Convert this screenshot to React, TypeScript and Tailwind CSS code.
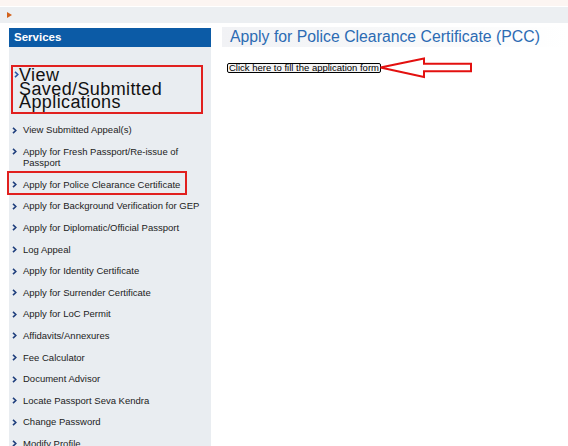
import React from "react";

const Chevron = ({ color = "#1f3f7d" }: { color?: string }) => (
  <svg width="5" height="7" viewBox="0 0 5 7" className="shrink-0">
    <polyline points="1,0.8 3.8,3.5 1,6.2" fill="none" stroke={color} strokeWidth="1.6" />
  </svg>
);

type Item = { label: React.ReactNode; highlight?: boolean };

const items: Item[] = [
  { label: "View Submitted Appeal(s)" },
  { label: <>Apply for Fresh Passport/Re-issue of<br />Passport</> },
  { label: "Apply for Police Clearance Certificate", highlight: true },
  { label: "Apply for Background Verification for GEP" },
  { label: "Apply for Diplomatic/Official Passport" },
  { label: "Log Appeal" },
  { label: "Apply for Identity Certificate" },
  { label: "Apply for Surrender Certificate" },
  { label: "Apply for LoC Permit" },
  { label: "Affidavits/Annexures" },
  { label: "Fee Calculator" },
  { label: "Document Advisor" },
  { label: "Locate Passport Seva Kendra" },
  { label: "Change Password" },
  { label: "Modify Profile" },
];

export default function App() {
  return (
    <div
      className="w-[568px] h-[446px] overflow-hidden bg-white"
      style={{ fontFamily: '"Liberation Sans", Arial, sans-serif' }}
    >
      <div className="h-[6px] bg-[#fcf5f2]" />
      <div className="h-[1px] bg-white" />
      <div className="h-[16px] bg-[#eceff2] flex items-center pl-[7px]">
        <div className="w-0 h-0 border-y-[3.5px] border-y-transparent border-l-[5px] border-l-[#d2621c]" />
      </div>
      <div className="flex">
        <div className="ml-[9px] mt-[5px] w-[202px] shrink-0">
          <div className="h-[19px] bg-[#0c5ba6] text-white font-bold text-[11.5px] leading-[19px] pl-[5px]">
            Services
          </div>
          <div className="bg-[#e9edf1] pt-[18px] pb-[40px]">
            <div className="ml-[2px] w-[192px] h-[49px] border-2 border-[#e1201f] flex items-start pl-[1px] pt-[2px]">
              <div className="mt-[2px]">
                <Chevron color="#2d58a8" />
              </div>
              <div className="text-[18px] leading-[13.5px] text-[#111] tracking-[0.4px]">
                View
                <br />
                Saved/Submitted
                <br />
                Applications
              </div>
            </div>
            <div className="mt-[5px] flex flex-col">
              {items.map((it, i) => (
                <div key={i} className="relative flex items-start py-[5px] pl-[3px]">
                  {it.highlight && (
                    <div className="absolute left-[-2px] top-[-2.5px] w-[180px] h-[24px] border-2 border-[#e1201f]" />
                  )}
                  <div className="w-[11px] pt-[2.5px] flex">
                    <Chevron />
                  </div>
                  <div className="text-[9.5px] leading-[11.6px] text-[#222]">{it.label}</div>
                </div>
              ))}
            </div>
          </div>
        </div>
        <div className="ml-[11px] mt-[4px] flex-1">
          <div className="h-[20px] bg-gradient-to-r from-[#f1f2f5] via-[#f7f8f9] to-white pl-[8px] text-[15.8px] leading-[20px] text-[#2c6bb3]">
            Apply for Police Clearance Certificate (PCC)
          </div>
          <div className="mt-[10px] flex items-center ml-[5px]">
            <div className="h-[10px] border border-black rounded-[2px] bg-[#f4f4f4] text-[9.5px] leading-[8px] text-black px-[1px] whitespace-nowrap">
              Click here to fill the application form
            </div>
            <svg width="94" height="22" viewBox="0 0 94 22" className="-ml-[2px]">
              <polygon
                points="1.5,10.5 45,1.5 45,6.8 92,6.8 92,14.2 45,14.2 45,20 1.5,10.5"
                fill="white"
                stroke="#e3100f"
                strokeWidth="2"
                strokeLinejoin="miter"
              />
            </svg>
          </div>
        </div>
      </div>
    </div>
  );
}
